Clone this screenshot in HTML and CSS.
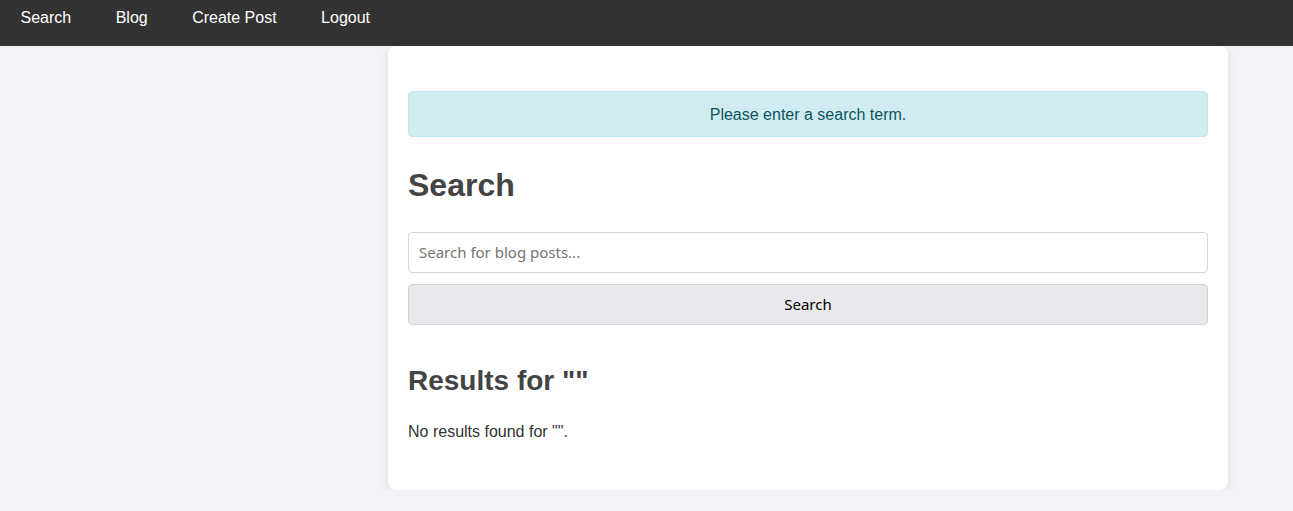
FILE: index.html
```html
<!DOCTYPE html>
<html lang="en">
<head>
<meta charset="utf-8">
<title>Search</title>
<link rel="stylesheet" href="styles.css">
</head>
<body>
<nav class="topnav">
  <a href="#" class="nav-link">Search</a>
  <a href="#" class="nav-link">Blog</a>
  <a href="#" class="nav-link">Create Post</a>
  <a href="#" class="nav-link">Logout</a>
</nav>
<div class="page">
  <div class="side"></div>
  <main class="card">
    <div class="alert">Please enter a search term.</div>
    <h1 class="title">Search</h1>
    <form class="search-form">
      <input class="search-input" type="text" placeholder="Search for blog posts...">
      <button class="search-btn" type="submit">Search</button>
    </form>
    <h2 class="results-title">Results for ""</h2>
    <p class="no-results">No results found for "".</p>
  </main>
</div>
</body>
</html>
```
FILE: styles.css
```css
html, body {
  margin: 0;
  padding: 0;
}
body {
  background: #f3f2f7;
  font-family: "Liberation Sans", Arial, sans-serif;
  font-size: 16px;
  color: #333;
}
.topnav {
  background: #333;
  height: 46px;
  box-sizing: border-box;
  padding-top: 9px;
  padding-left: 0.5px;
  white-space: nowrap;
}
.nav-link {
  display: inline-block;
  padding: 0 20px;
  line-height: 18px;
  color: #fff;
  text-decoration: none;
}
.page {
  display: grid;
  grid-template-columns: 388px 840px;
}
.card {
  background: #fff;
  border-radius: 8px;
  box-shadow: 0 2px 8px rgba(0, 0, 0, 0.09);
  padding: 45px 20px 49px;
}
.alert {
  background: #d1ecf1;
  border: 1px solid #bee5eb;
  color: #0c5460;
  border-radius: 4px;
  padding: 14px 20px 12px;
  text-align: center;
}
.title {
  font-size: 32px;
  font-weight: bold;
  color: #444;
  margin: 30px 0 27.5px;
}
.search-form {
  display: flex;
  flex-direction: column;
  gap: 11px;
}
.search-input,
.search-btn {
  font-family: "Noto Sans", "Open Sans", sans-serif;
  font-size: 15px;
  height: 41px;
  box-sizing: border-box;
  border-radius: 4px;
  margin: 0;
  width: 100%;
}
.search-input {
  border: 1px solid #d4d4d9;
  padding: 0 10px;
  color: #333;
  background: #fff;
}
.search-input::placeholder {
  color: #757575;
}
.search-btn {
  border: 1px solid #d4d4d8;
  background: #e9e9ed;
  color: #000;
  padding: 0;
}
.results-title {
  font-size: 28px;
  font-weight: bold;
  color: #444;
  margin: 40.2px 0 26px;
}
.no-results {
  margin: 0;
  color: #333;
}
```
